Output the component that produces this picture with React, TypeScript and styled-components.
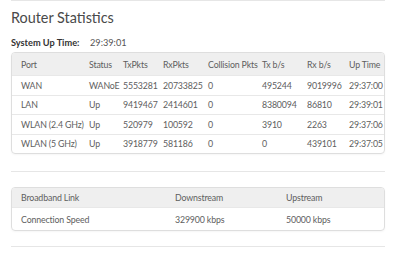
import styled, { createGlobalStyle } from "styled-components";

const GlobalStyle = createGlobalStyle`
  body {
    margin: 0;
    background: #ffffff;
    font-family: Lato, "Open Sans", sans-serif;
    color: #5e5e5e;
  }
`;

const Page = styled.main`
  width: 374px;
  padding: 0 14px 0 11px;
`;

const Divider = styled.hr<{ $gap?: number }>`
  margin: ${(p) => p.$gap ?? 0}px 0 0;
  border: 0;
  border-top: 1px solid #e6e6e6;
`;

const Title = styled.h1`
  margin: 8px 0 0;
  font-size: 14.4px;
  line-height: 18px;
  font-weight: 400;
  color: #4a4a4a;
`;

const UpTime = styled.div`
  display: flex;
  margin-top: 10px;
  font-size: 9.2px;
  line-height: 12px;
  color: #555555;

  > strong {
    width: 79px;
    font-weight: 700;
    color: #333333;
  }
`;

const Card = styled.div<{ $gap: number }>`
  margin-top: ${(p) => p.$gap}px;
  border: 1px solid #dedede;
  border-radius: 4px;
  overflow: hidden;
  box-shadow: 0 1px 2px rgba(0, 0, 0, 0.04);
`;

const Table = styled.table`
  width: 100%;
  border-collapse: collapse;
  table-layout: fixed;
  font-size: 8.8px;
  letter-spacing: -0.15px;
  color: #5e5e5e;
`;

const Head = styled.th<{ $h: number }>`
  height: ${(p) => p.$h}px;
  padding: 0 0 0 3px;
  background: #efefef;
  font-weight: 400;
  text-align: left;
  white-space: nowrap;

  &:first-child {
    padding-left: 9px;
  }
`;

const Cell = styled.td<{ $h: number }>`
  height: ${(p) => p.$h}px;
  padding: 0 0 0 3px;
  border-top: 1px solid #e8e8e8;
  white-space: nowrap;

  &:first-child {
    padding-left: 9px;
  }
`;

type Grid = {
  widths: number[];
  head: string[];
  rows: string[][];
  headH: number;
  rowH: number;
};

const stats: Grid = {
  widths: [74, 34, 40, 45, 54, 45, 42, 38],
  head: ["Port", "Status", "TxPkts", "RxPkts", "Collision Pkts", "Tx b/s", "Rx b/s", "Up Time"],
  rows: [
    ["WAN", "WANoE", "5553281", "20733825", "0", "495244", "9019996", "29:37:00"],
    ["LAN", "Up", "9419467", "2414601", "0", "8380094", "86810", "29:39:01"],
    ["WLAN (2.4 GHz)", "Up", "520979", "100592", "0", "3910", "2263", "29:37:06"],
    ["WLAN (5 GHz)", "Up", "3918779", "581186", "0", "0", "439101", "29:37:05"],
  ],
  headH: 22,
  rowH: 18.5,
};

const broadband: Grid = {
  widths: [160, 111, 101],
  head: ["Broadband Link", "Downstream", "Upstream"],
  rows: [["Connection Speed", "329900 kbps", "50000 kbps"]],
  headH: 19,
  rowH: 22,
};

const DataTable = ({ grid, gap }: { grid: Grid; gap: number }) => (
  <Card $gap={gap}>
    <Table>
      <colgroup>
        {grid.widths.map((w, i) => (
          <col key={i} style={{ width: w }} />
        ))}
      </colgroup>
      <thead>
        <tr>
          {grid.head.map((h) => (
            <Head key={h} $h={grid.headH}>
              {h}
            </Head>
          ))}
        </tr>
      </thead>
      <tbody>
        {grid.rows.map((row) => (
          <tr key={row[0]}>
            {row.map((v, i) => (
              <Cell key={i} $h={grid.rowH}>
                {v}
              </Cell>
            ))}
          </tr>
        ))}
      </tbody>
    </Table>
  </Card>
);

export default function App() {
  return (
    <Page>
      <GlobalStyle />
      <Divider />
      <Title>Router Statistics</Title>
      <UpTime>
        <strong>System Up Time:</strong>
        <span>29:39:01</span>
      </UpTime>
      <DataTable grid={stats} gap={3} />
      <Divider $gap={17} />
      <DataTable grid={broadband} gap={15} />
      <Divider $gap={15} />
    </Page>
  );
}
